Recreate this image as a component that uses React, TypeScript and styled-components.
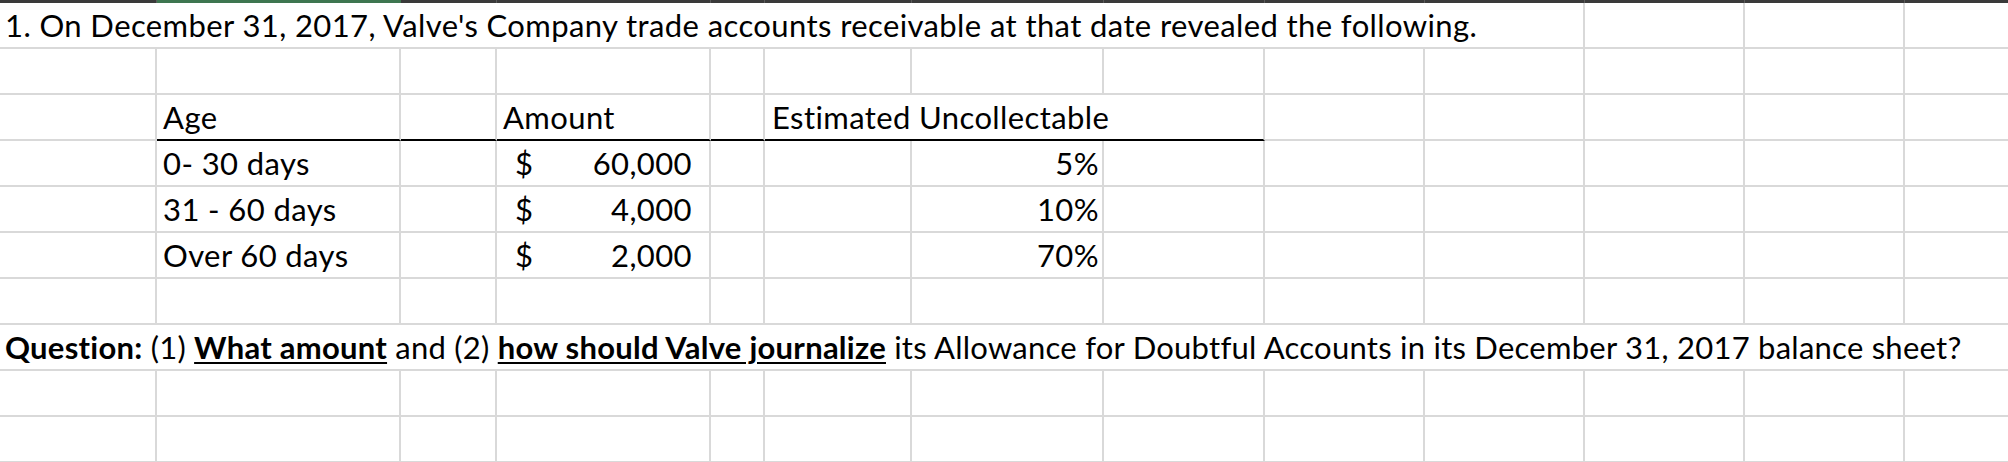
import styled, { createGlobalStyle } from 'styled-components';

const COLS = [157, 244, 96, 214, 54, 147, 192, 161, 160, 160, 160, 160, 160];
const GRID = '#d9d9d9';

const GlobalStyle = createGlobalStyle`
  html, body {
    margin: 0;
    padding: 0;
    background: #ffffff;
    overflow: hidden;
  }
`;

const Sheet = styled.div`
  display: grid;
  grid-template-columns: ${COLS.map((w) => `${w}px`).join(' ')};
  grid-template-rows: 3px;
  grid-auto-rows: 46px;
  width: max-content;
  font-family: Lato, 'Open Sans', 'Liberation Sans', sans-serif;
  font-size: 31px;
  letter-spacing: 0.4px;
  color: #000;
`;

const HeaderEdge = styled.div<{ $active?: boolean }>`
  background: ${(p) => (p.$active ? '#3e7650' : '#3a3a3a')};
  border-right: 1px solid ${(p) => (p.$active ? '#3e7650' : '#5a5a5a')};
`;

const Cell = styled.div<{ $span?: number; $thick?: boolean; $right?: boolean }>`
  grid-column: span ${(p) => p.$span ?? 1};
  box-sizing: border-box;
  border-right: 2px solid ${GRID};
  border-bottom: 2px solid ${(p) => (p.$thick ? '#000' : GRID)};
  line-height: 44px;
  white-space: nowrap;
  padding: 0 3px 0 6px;
  text-align: ${(p) => (p.$right ? 'right' : 'left')};
  overflow: visible;
`;

const TitleCell = styled(Cell)`
  padding-left: 5px;
`;

const QuestionCell = styled(TitleCell)`
  letter-spacing: 0.25px;
`;

const HeadCell = styled(Cell)`
  padding-left: 7px;
`;

const MoneyCell = styled(Cell)`
  display: flex;
  justify-content: space-between;
  padding: 0 17px 0 18px;
`;

const Strong = styled.b<{ $line?: boolean }>`
  font-weight: 700;
  text-decoration: ${(p) => (p.$line ? 'underline' : 'none')};
  text-decoration-thickness: 2px;
  text-underline-offset: 3px;
`;

const ages = [
  { label: '0- 30 days', amount: '60,000', rate: '5%' },
  { label: '31 - 60 days', amount: '4,000', rate: '10%' },
  { label: 'Over 60 days', amount: '2,000', rate: '70%' },
];

function Blank({ count }: { count: number }) {
  return (
    <>
      {Array.from({ length: count }).map((_, i) => (
        <Cell key={i} />
      ))}
    </>
  );
}

export default function App() {
  return (
    <>
      <GlobalStyle />
      <Sheet>
        {COLS.map((_, i) => (
          <HeaderEdge key={i} $active={i === 1} />
        ))}

        <TitleCell $span={10}>
          1. On December 31, 2017, Valve's Company trade accounts receivable at that date revealed the following.
        </TitleCell>
        <Blank count={3} />

        <Blank count={13} />

        <Cell />
        <Cell $thick>Age</Cell>
        <Cell $thick />
        <Cell $thick>Amount</Cell>
        <Cell $thick />
        <HeadCell $span={3} $thick>
          Estimated Uncollectable
        </HeadCell>
        <Blank count={5} />

        {ages.map((row) => (
          <>
            <Cell />
            <Cell>{row.label}</Cell>
            <Cell />
            <MoneyCell>
              <span>$</span>
              <span>{row.amount}</span>
            </MoneyCell>
            <Cell />
            <Cell />
            <Cell $right>{row.rate}</Cell>
            <Blank count={6} />
          </>
        ))}

        <Blank count={13} />

        <QuestionCell $span={13}>
          <Strong>Question:</Strong> (1) <Strong $line>What amount</Strong> and (2){' '}
          <Strong $line>how should Valve journalize</Strong> its Allowance for Doubtful Accounts in its
          December 31, 2017 balance sheet?
        </QuestionCell>

        <Blank count={13} />
        <Blank count={13} />
      </Sheet>
    </>
  );
}
